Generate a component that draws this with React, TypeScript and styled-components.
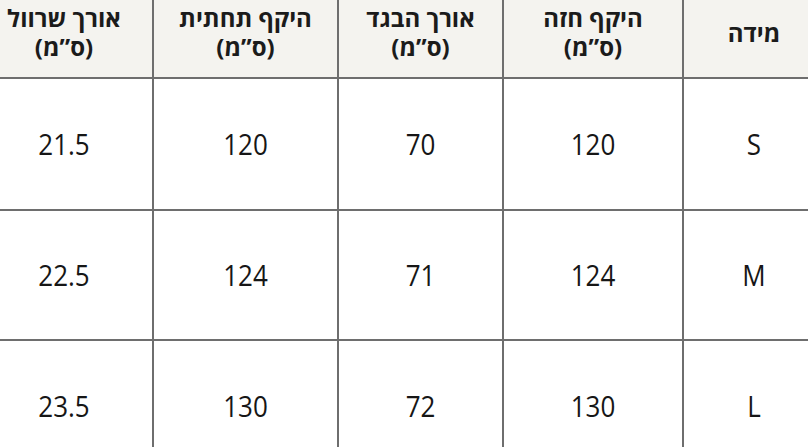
import styled, { createGlobalStyle } from "styled-components";

const GlobalStyle = createGlobalStyle`
  html, body {
    margin: 0;
    padding: 0;
    background: #ffffff;
  }
  body {
    font-family: "Open Sans", "Liberation Sans", sans-serif;
    color: #161616;
  }
`;

type Row = {
  size: string;
  chest: string;
  length: string;
  hem: string;
  sleeve: string;
};

const columns = [
  { key: "size", title: "מידה", unit: false },
  { key: "chest", title: "היקף חזה", unit: true },
  { key: "length", title: "אורך הבגד", unit: true },
  { key: "hem", title: "היקף תחתית", unit: true },
  { key: "sleeve", title: "אורך שרוול", unit: true },
] as const;

const rows: Row[] = [
  { size: "S", chest: "120", length: "70", hem: "120", sleeve: "21.5" },
  { size: "M", chest: "124", length: "71", hem: "124", sleeve: "22.5" },
  { size: "L", chest: "130", length: "72", hem: "130", sleeve: "23.5" },
];

function App() {
  return (
    <Viewport>
      <GlobalStyle />
      <Table>
        {columns.map((col) => (
          <HeadCell key={col.key}>
            <span>{col.title}</span>
            {col.unit && <span>(ס”מ)</span>}
          </HeadCell>
        ))}
        {rows.map((row) =>
          columns.map((col) => (
            <Cell key={row.size + col.key}>
              <Value>{row[col.key]}</Value>
            </Cell>
          ))
        )}
      </Table>
    </Viewport>
  );
}

const Viewport = styled.div`
  width: 808px;
  height: 447px;
  overflow: hidden;
  position: relative;
`;

const Table = styled.div`
  direction: rtl;
  display: grid;
  grid-template-columns: 140px 178px 163px 183px 176px;
  grid-template-rows: 96px 130px 128px 130px;
  gap: 2px;
  width: 848px;
  margin: -19px 0 0 -24px;
  background: #6e6e6e;
`;

const HeadCell = styled.div`
  background: #f4f3ef;
  display: flex;
  flex-direction: column;
  align-items: center;
  justify-content: center;
  padding-top: 6px;
  font-family: "Open Sans", "Liberation Sans", sans-serif;
  font-size: 24px;
  font-weight: 700;
  line-height: 29px;
  color: #1b1b1b;
`;

const Cell = styled.div`
  background: #ffffff;
  display: flex;
  align-items: center;
  justify-content: center;
  direction: ltr;
`;

const Value = styled.span`
  display: inline-block;
  font-family: "Open Sans", "Noto Sans", sans-serif;
  font-size: 26px;
  color: #161616;
  transform: scaleY(1.1);
`;

export default App;
